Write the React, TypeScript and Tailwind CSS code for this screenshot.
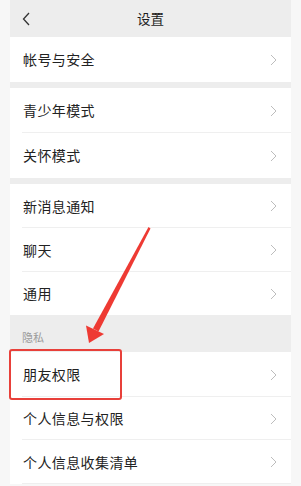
import React from 'react';

const font = { fontFamily: '"Noto Sans CJK SC", "Noto Sans", sans-serif' };

function Chevron() {
  return (
    <svg width="7" height="12" viewBox="0 0 7 12" fill="none">
      <path d="M1 1l5 5-5 5" stroke="#bdbdbd" strokeWidth="1" />
    </svg>
  );
}

function Row({ label, h = 'h-[45px]', line = true }: { label: string; h?: string; line?: boolean }) {
  return (
    <div className={`relative flex items-center justify-between bg-white pl-[13px] pr-[14px] ${h}`}>
      <span className="text-[14px] text-[#222] tracking-[0.4px]">{label}</span>
      <Chevron />
      {line && <div className="absolute bottom-0 left-[12px] right-0 h-px bg-[#efefef]" />}
    </div>
  );
}

export default function App() {
  return (
    <div className="relative w-[301px] h-[486px] overflow-hidden bg-[#f7f7f7] px-[10px]" style={font}>
      <div className="flex flex-col">
        <div className="relative flex items-center justify-center h-[37px] bg-[#ededed]">
          <svg className="absolute left-[12px] top-[12px]" width="8" height="14" viewBox="0 0 8 14" fill="none">
            <path d="M7 1L1.5 7 7 13" stroke="#333" strokeWidth="1.3" />
          </svg>
          <span className="text-[13.5px] text-[#1c1c1c]">设置</span>
        </div>
        <Row label="帐号与安全" line={false} />
        <div className="h-[6px] bg-[#ededed]" />
        <Row label="青少年模式" />
        <Row label="关怀模式" line={false} />
        <div className="h-[6px] bg-[#ededed]" />
        <Row label="新消息通知" h="h-[44px]" />
        <Row label="聊天" h="h-[44px]" />
        <Row label="通用" h="h-[43px]" line={false} />
        <div className="flex items-end h-[37px] bg-[#ededed] pl-[12px] pb-[7px]">
          <span className="text-[11px] text-[#9a9a9a]">隐私</span>
        </div>
        <Row label="朋友权限" />
        <Row label="个人信息与权限" h="h-[43px]" />
        <Row label="个人信息收集清单" h="h-[44px]" />
      </div>
      <div className="absolute left-[9px] top-[349px] w-[113px] h-[51px] border-2 border-[#e8403a] rounded-[3px]" />
      <svg className="absolute left-0 top-0" width="301" height="486" viewBox="0 0 301 486">
        <polygon points="148.5,227 150.5,228.5 98.5,331.5 93,328.5" fill="#ee3a33" />
        <polygon points="89,343 86,325.5 104,334" fill="#ee3a33" />
      </svg>
    </div>
  );
}
